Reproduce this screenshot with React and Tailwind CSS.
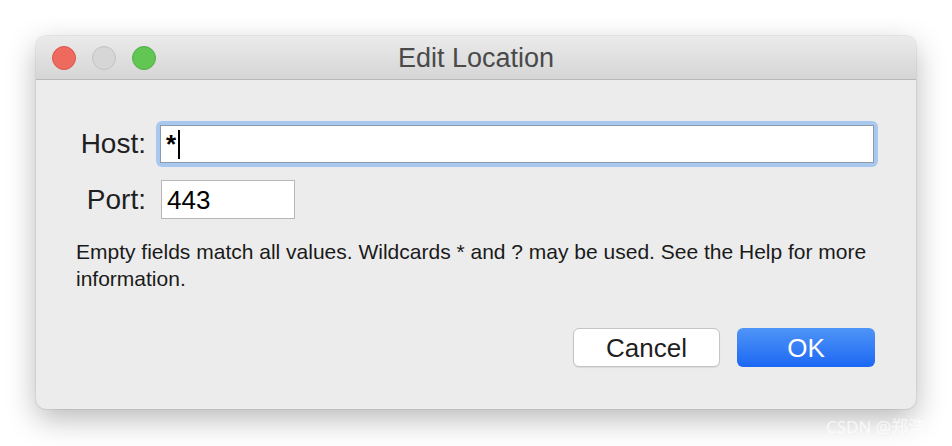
export default function App() {
  const font = { fontFamily: '"Liberation Sans", Arial, sans-serif' };
  return (
    <div className="w-[952px] h-[446px] bg-white overflow-hidden relative" style={font}>
      <div className="absolute left-[36px] top-[36px] w-[880px] h-[373px] rounded-[10px] bg-[#ececec] overflow-hidden shadow-[0_10px_30px_rgba(0,0,0,0.28),0_0_0_1px_rgba(0,0,0,0.06)] flex flex-col">
        {/* title bar */}
        <div className="h-[44px] shrink-0 relative flex items-center bg-gradient-to-b from-[#ebebeb] to-[#d5d5d5] border-b border-[#b8b8b8]">
          <div className="flex items-center gap-[16px] pl-[16px]">
            <div className="w-[24px] h-[24px] rounded-full bg-[#ee6a5f] border border-[#d9574c]" />
            <div className="w-[24px] h-[24px] rounded-full bg-[#d6d6d6] border border-[#c2c2c2]" />
            <div className="w-[24px] h-[24px] rounded-full bg-[#62c655] border border-[#4fae42]" />
          </div>
          <div className="absolute inset-0 flex items-center justify-center pt-[1px] text-[27px] leading-[30px] text-[#4a4a4a]">
            Edit Location
          </div>
        </div>
        {/* body */}
        <div className="flex flex-col pt-[41px]">
          <div className="flex items-center">
            <div className="w-[110px] text-right text-[28px] leading-[32px] text-[#1f1f1f]">Host:</div>
            <div className="ml-[10px] p-[4px] rounded-[6px] bg-[#a9c8f0] w-[722px]">
              <div className="h-[38px] bg-white border border-[#8e9aab] flex items-center pl-[5px] text-[26px] leading-[30px] text-black">
                <span className="font-bold">*</span>
                <span className="ml-[2px] w-[2px] h-[29px] bg-black" />
              </div>
            </div>
          </div>
          <div className="flex items-center mt-[13px]">
            <div className="w-[110px] text-right text-[28px] leading-[32px] text-[#1f1f1f]">Port:</div>
            <div className="ml-[15px] w-[134px] h-[39px] bg-white border border-[#b8b8b8] flex items-center pl-[5px] text-[26px] leading-[30px] text-black">
              443
            </div>
          </div>
          <div className="pl-[40px] mt-[19px] w-[850px] text-[21px] leading-[27px] text-[#1a1a1a]">
            Empty fields match all values. Wildcards * and ? may be used. See the Help for more information.
          </div>
          <div className="flex justify-end gap-[17px] pr-[41px] mt-[36px]">
            <div className="w-[147px] h-[39px] rounded-[6px] bg-white border border-[#c4c4c4] shadow-[0_1px_1px_rgba(0,0,0,0.08)] flex items-center justify-center text-[26px] leading-[30px] text-[#1f1f1f]">
              Cancel
            </div>
            <div className="w-[138px] h-[39px] rounded-[6px] bg-gradient-to-b from-[#4f94f7] to-[#1b67f3] flex items-center justify-center text-[26px] leading-[30px] text-white">
              OK
            </div>
          </div>
        </div>
      </div>
      <div className="absolute left-[826px] top-[414px] text-[17px] text-white/70 whitespace-nowrap" style={{ fontFamily: '"Noto Sans", "Noto Sans CJK SC", sans-serif' }}>
        CSDN @郑浩
      </div>
    </div>
  );
}
